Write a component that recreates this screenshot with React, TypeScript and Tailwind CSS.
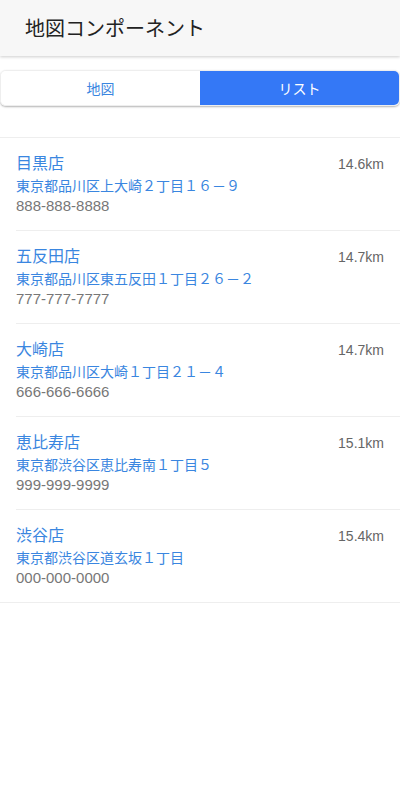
const stores = [
  { name: "目黒店", address: "東京都品川区上大崎２丁目１６－９", tel: "888-888-8888", distance: "14.6km" },
  { name: "五反田店", address: "東京都品川区東五反田１丁目２６－２", tel: "777-777-7777", distance: "14.7km" },
  { name: "大崎店", address: "東京都品川区大崎１丁目２１－４", tel: "666-666-6666", distance: "14.7km" },
  { name: "恵比寿店", address: "東京都渋谷区恵比寿南１丁目５", tel: "999-999-9999", distance: "15.1km" },
  { name: "渋谷店", address: "東京都渋谷区道玄坂１丁目", tel: "000-000-0000", distance: "15.4km" },
];

export default function App() {
  return (
    <div
      className="w-[400px] h-[788px] bg-white flex flex-col"
      style={{ fontFamily: '"Noto Sans CJK JP", "Noto Sans", sans-serif' }}
    >
      {/* ヘッダー */}
      <header className="h-14 bg-[#f7f7f7] flex items-center pl-[25px] shadow-[0_1px_3px_rgba(0,0,0,0.2)]">
        <h1 className="text-[20px] text-[#222]">地図コンポーネント</h1>
      </header>

      {/* タブ切り替え */}
      <div className="mt-[14px] flex h-9 rounded-md overflow-hidden shadow-[0_1px_2px_rgba(0,0,0,0.3)] border border-[#eee]">
        <button className="flex-1 bg-white text-[#3a86e0] text-sm">地図</button>
        <button className="flex-1 bg-[#3478f6] text-white text-sm">リスト</button>
      </div>

      {/* 店舗リスト */}
      <ul className="mt-[31px] border-t border-[#eee] border-b">
        {stores.map((s, i) => (
          <li key={s.name} className="pl-4">
            <div
              className={
                "flex justify-between pr-4 pt-[12px] pb-[14px] " +
                (i < stores.length - 1 ? "border-b border-[#eee]" : "")
              }
            >
              <div className="flex flex-col">
                <span className="text-base text-[#3a86e0] leading-6">{s.name}</span>
                <span className="text-sm text-[#3a86e0] leading-[22px]">{s.address}</span>
                <span className="text-[15px] text-[#777] leading-5 font-['Liberation_Sans',sans-serif]">
                  {s.tel}
                </span>
              </div>
              <span className="text-sm text-[#666] leading-6 mt-[2px] font-['Liberation_Sans',sans-serif]">
                {s.distance}
              </span>
            </div>
          </li>
        ))}
      </ul>
    </div>
  );
}
